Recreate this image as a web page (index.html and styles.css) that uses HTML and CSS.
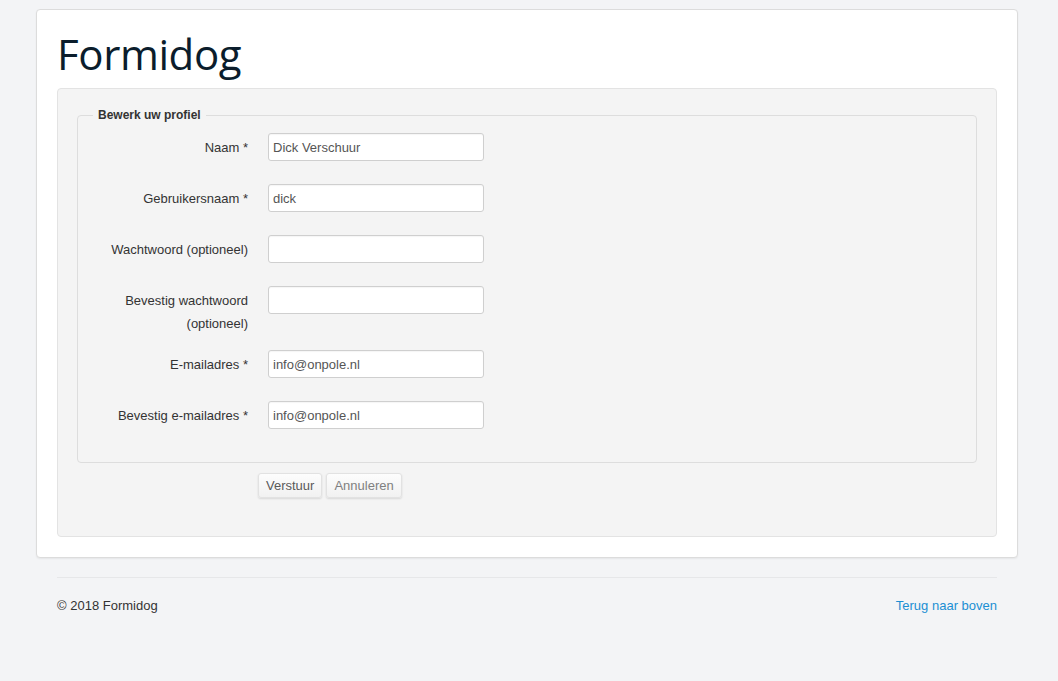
FILE: index.html
```html
<!DOCTYPE html>
<html lang="nl">
<head>
<meta charset="utf-8">
<title>Formidog</title>
<link rel="stylesheet" href="styles.css">
</head>
<body>
<div class="page">
  <div class="card">
    <h1 class="brand">Formidog</h1>
    <form class="well">
      <fieldset class="group">
        <legend class="group-title">Bewerk uw profiel</legend>
        <div class="row">
          <label class="row-label">Naam *</label>
          <input class="field" type="text" value="Dick Verschuur">
        </div>
        <div class="row">
          <label class="row-label">Gebruikersnaam *</label>
          <input class="field" type="text" value="dick">
        </div>
        <div class="row">
          <label class="row-label">Wachtwoord (optioneel)</label>
          <input class="field" type="password" value="">
        </div>
        <div class="row">
          <label class="row-label">Bevestig wachtwoord (optioneel)</label>
          <input class="field" type="password" value="">
        </div>
        <div class="row">
          <label class="row-label">E-mailadres *</label>
          <input class="field" type="text" value="info@onpole.nl">
        </div>
        <div class="row">
          <label class="row-label">Bevestig e-mailadres *</label>
          <input class="field" type="text" value="info@onpole.nl">
        </div>
      </fieldset>
      <div class="actions">
        <button type="button" class="btn btn-primary">Verstuur</button>
        <button type="button" class="btn btn-muted">Annuleren</button>
      </div>
    </form>
  </div>
  <footer class="footer">
    <span class="copy">© 2018 Formidog</span>
    <a class="top-link" href="#">Terug naar boven</a>
  </footer>
</div>
</body>
</html>
```
FILE: styles.css
```css
html, body {
  margin: 0;
  padding: 0;
  background: #f3f4f6;
  font-family: "Liberation Sans", Arial, sans-serif;
  font-size: 13px;
  color: #333;
}

.page {
  width: 982px;
  margin: 9px 0 0 36px;
}

.card {
  background: #fff;
  border: 1px solid #dcdcdc;
  border-radius: 4px;
  box-shadow: 0 1px 2px rgba(0, 0, 0, 0.06);
  padding: 0 20px 20px;
}

.brand {
  font-family: "Open Sans", "Noto Sans", sans-serif;
  font-weight: 400;
  font-size: 42px;
  line-height: 50px;
  color: #0b1d2c;
  margin: 19px 0 9px;
  letter-spacing: -0.4px;
}

.well {
  background: #f4f4f4;
  border: 1px solid #e3e3e3;
  border-radius: 4px;
  padding: 18px 19px 38px;
  margin: 0;
}

.group {
  margin: 0;
  border: 1px solid #dddddd;
  border-radius: 4px;
  padding: 10px 15px 10px;
}

.group-title {
  font-size: 12px;
  font-weight: bold;
  line-height: 16px;
  padding: 0 5px;
  color: #333;
}

.row {
  display: flex;
  align-items: flex-start;
  gap: 20px;
  min-height: 36px;
  margin-bottom: 15px;
}

.row-label {
  width: 155px;
  text-align: right;
  line-height: 23px;
  padding-top: 3px;
  color: #333;
}

.field {
  box-sizing: border-box;
  width: 216px;
  height: 28px;
  margin: 0;
  padding: 0 4px;
  border: 1px solid #cfcfcf;
  border-radius: 3px;
  background: #fff;
  font-family: "Liberation Sans", Arial, sans-serif;
  font-size: 13px;
  color: #555;
  box-shadow: inset 0 1px 1px rgba(0, 0, 0, 0.04);
}

.actions {
  display: flex;
  gap: 4px;
  margin: 10px 0 0 181px;
}

.btn {
  font-family: "Liberation Sans", Arial, sans-serif;
  font-size: 13px;
  line-height: 17px;
  padding: 3px 7px 3px;
  border: 1px solid #e2e2e2;
  border-radius: 3px;
  background: linear-gradient(#fdfdfd, #f1f1f1);
  box-shadow: 0 1px 2px rgba(0, 0, 0, 0.12);
  cursor: pointer;
}

.btn-primary {
  color: #5a5a5a;
}

.btn-muted {
  color: #808080;
}

.footer {
  margin: 19px 21px 0;
  border-top: 1px solid #e6e7e9;
  padding-top: 19px;
  display: flex;
  justify-content: space-between;
  line-height: 18px;
}

.copy {
  color: #333;
}

.top-link {
  color: #1b8fd3;
  text-decoration: none;
}
```
